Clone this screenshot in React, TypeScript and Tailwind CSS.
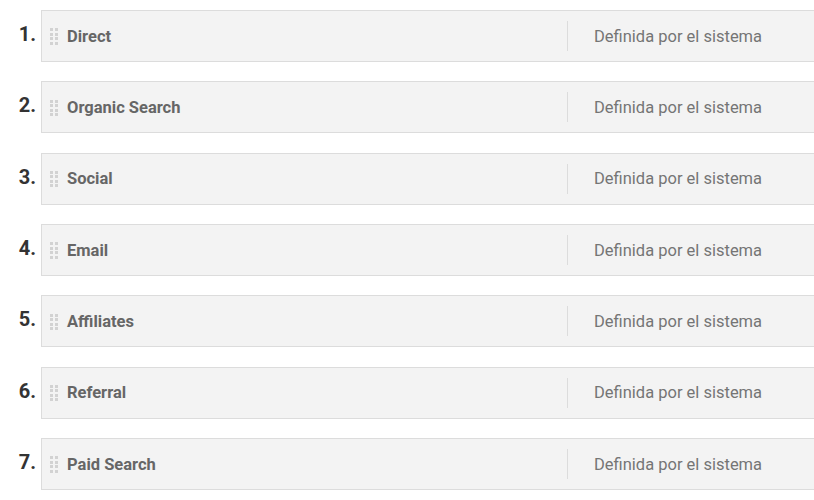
import React from "react";

const items = ["Direct", "Organic Search", "Social", "Email", "Affiliates", "Referral", "Paid Search"];

function Handle() {
  return (
    <div className="grid grid-cols-2 gap-x-[1.5px] gap-y-[1.5px] w-[7.5px] shrink-0 mt-[1px]">
      {Array.from({ length: 8 }).map((_, i) => (
        <span key={i} className="block w-[3px] h-[3px] bg-[#d2d2d2]" />
      ))}
    </div>
  );
}

export default function App() {
  return (
    <div className="w-[814px] h-[500px] bg-white overflow-hidden pt-[10px]" style={{ fontFamily: "Roboto, 'Liberation Sans', sans-serif" }}>
      <div className="flex flex-col gap-[19.33px]">
        {items.map((name, i) => (
          <div key={name} className="flex items-center">
            <div className="w-[36px] text-right text-[20px] font-bold text-[#333] leading-none -mt-[4px]">{i + 1}.</div>
            <div className="ml-[5px] flex-1 h-[52px] bg-[#f3f3f3] border border-[#dcdcdc] border-r-0 flex items-center pl-[8px]">
              <Handle />
              <div className="ml-[9.5px] w-[500px] text-[16.5px] font-bold text-[#666] leading-none mt-[2px]">{name}</div>
              <div className="w-px h-[30px] bg-[#dcdcdc]" />
              <div className="ml-[26px] text-[16.5px] text-[#757575] leading-none mt-[2px]">Definida por el sistema</div>
            </div>
          </div>
        ))}
      </div>
    </div>
  );
}
